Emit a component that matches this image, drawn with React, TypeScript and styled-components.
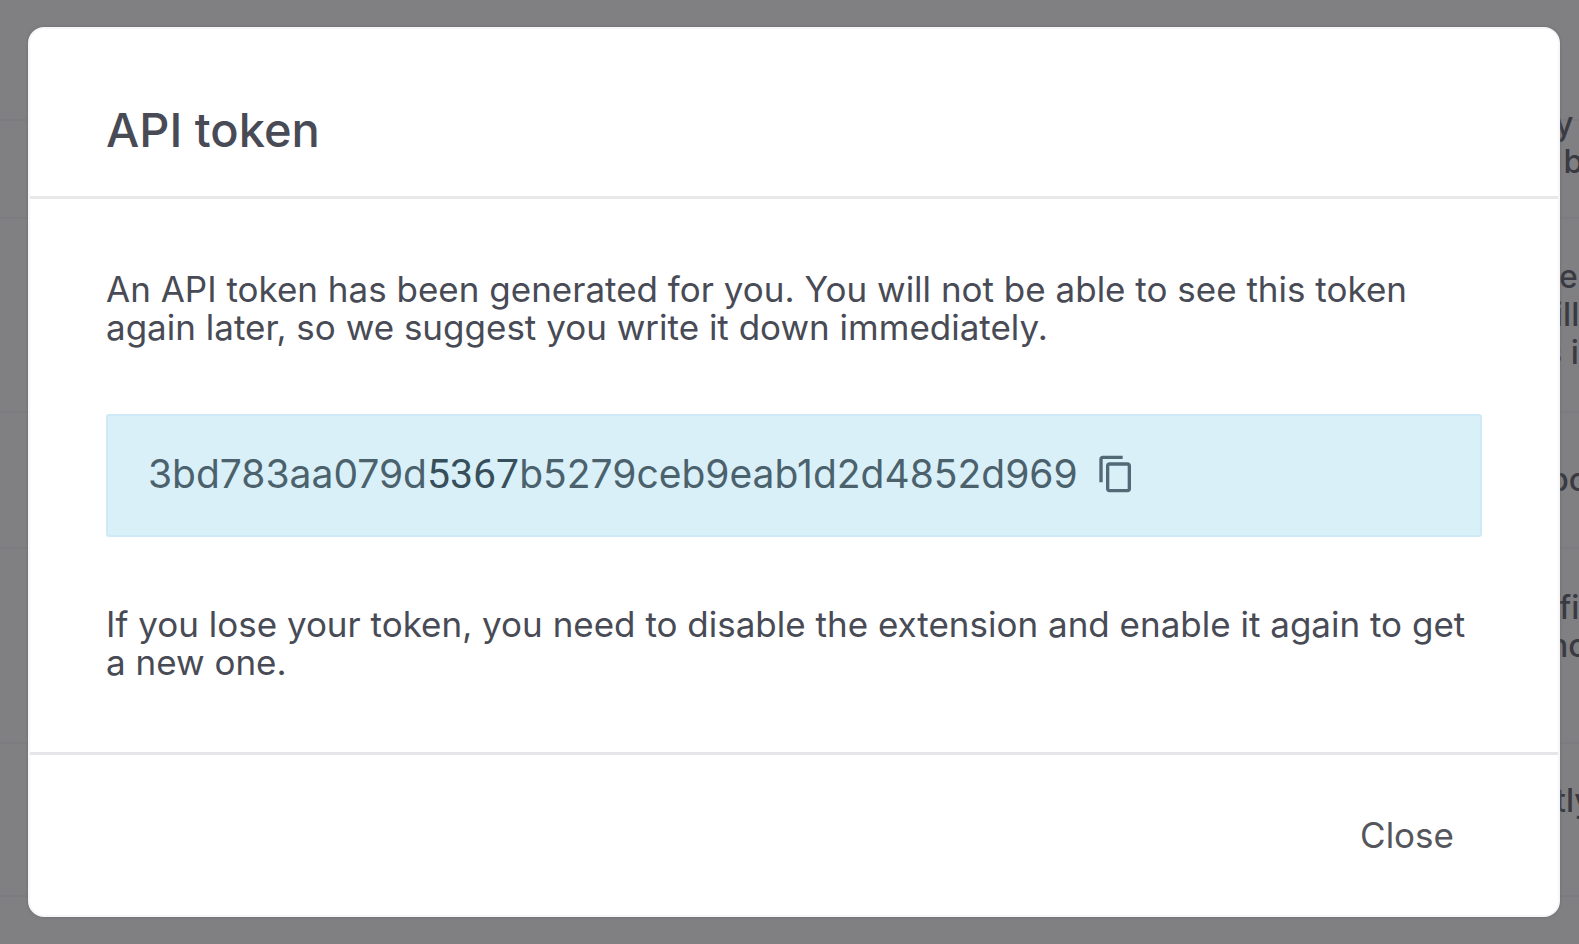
import React from "react";
import styled, { createGlobalStyle } from "styled-components";
import { MdContentCopy } from "react-icons/md";

const GlobalStyle = createGlobalStyle`
  * { box-sizing: border-box; }
  body {
    margin: 0;
    background: #808082;
    color: #484b55;
    font-family: Inter, "Open Sans", sans-serif;
  }
`;

const Stage = styled.div`
  position: relative;
  min-height: 100vh;
  overflow: hidden;
`;

const Backdrop = styled.div`
  position: absolute;
  inset: 0;
  display: flex;
  flex-direction: column;
  padding: 24px 0;
  overflow: hidden;
`;

const BackdropRow = styled.div<{ $height: number; $lift?: number }>`
  display: flex;
  flex-direction: column;
  align-items: flex-end;
  justify-content: center;
  flex: none;
  height: ${(p) => p.$height}px;
  padding-bottom: ${(p) => p.$lift ?? 0}px;
  border-bottom: 2px solid #7b7b80;
`;

const Fragment = styled.span<{ $width: number }>`
  width: ${(p) => p.$width}px;
  height: 38px;
  flex: none;
  overflow: hidden;
  white-space: pre;
  font-size: 32px;
  font-weight: 500;
  line-height: 38px;
  color: #3a3a42;
`;

const Overlay = styled.div`
  position: relative;
  padding: 27px 19px 27px 28px;
`;

const Dialog = styled.section`
  border: 2px solid #f6f6f8;
  border-radius: 16px;
  background: #fff;
  box-shadow: 0 0 3px #68686c;
`;

const Header = styled.header`
  padding: 71px 76px 36px;
  border-bottom: 3px solid #e8e8e9;
`;

const Title = styled.h1`
  margin: 0;
  font-size: 47px;
  font-weight: 500;
  line-height: 60px;
`;

const Body = styled.div`
  display: flex;
  flex-direction: column;
  gap: 68px;
  padding: 71px 76px;
`;

const Text = styled.p`
  margin: 0;
  font-size: 35px;
  line-height: 38px;
`;

const TokenBox = styled.div`
  display: flex;
  align-items: center;
  height: 123px;
  padding: 0 40px 4px;
  border: 2px solid #cfeaf7;
  border-radius: 3px;
  background: #daf0f9;
  color: #4b626d;
  font-size: 39px;
  line-height: 48px;
`;

const Token = styled.code`
  font-family: inherit;
`;

const Typed = styled.span`
  color: #364f5b;
  font-family: Roboto, sans-serif;
  font-size: 41px;
  font-weight: 400;
`;

const CopyButton = styled.button`
  display: flex;
  margin: 0 0 0 18px;
  padding: 0;
  border: 0;
  background: none;
  color: #526a75;
  cursor: pointer;
`;

const Footer = styled.footer`
  display: flex;
  justify-content: flex-end;
  padding: 48px 76px;
  border-top: 3px solid #e6e6e8;
`;

const CloseButton = styled.button`
  padding: 12px 28px;
  border: 0;
  background: none;
  color: #55565c;
  font: inherit;
  font-size: 35px;
  line-height: 40px;
  cursor: pointer;
`;

type Line = { text: string; width: number };

const rows: { height: number; lift?: number; lines: Line[] }[] = [
  { height: 97, lines: [] },
  {
    height: 98,
    lift: 14,
    lines: [
      { text: "y", width: 24 },
      { text: " b", width: 24 },
      { text: "", width: 24 },
    ],
  },
  {
    height: 194,
    lines: [
      { text: "el", width: 20 },
      { text: "ill", width: 24 },
      { text: "s i", width: 34 },
    ],
  },
  { height: 136, lines: [{ text: "po", width: 30 }] },
  {
    height: 195,
    lines: [
      { text: "fi", width: 20 },
      { text: "no", width: 30 },
      { text: "", width: 24 },
    ],
  },
  {
    height: 153,
    lines: [
      { text: "tly", width: 24 },
      { text: "", width: 24 },
    ],
  },
];

export default function App() {
  return (
    <Stage>
      <GlobalStyle />
      <Backdrop aria-hidden="true">
        {rows.map((row, i) => (
          <BackdropRow key={i} $height={row.height} $lift={row.lift}>
            {row.lines.map((line, j) => (
              <Fragment key={j} $width={line.width}>
                {line.text}
              </Fragment>
            ))}
          </BackdropRow>
        ))}
      </Backdrop>
      <Overlay>
        <Dialog role="dialog" aria-modal="true" aria-labelledby="token-title">
          <Header>
            <Title id="token-title">API token</Title>
          </Header>
          <Body>
            <Text>
              An API token has been generated for you. You will not be able to see this token again
              later, so we suggest you write it down immediately.
            </Text>
            <TokenBox>
              <Token>
                3bd783aa079d<Typed>5367</Typed>b5279ceb9eab1d2d4852d969
              </Token>
              <CopyButton type="button" aria-label="Copy token">
                <MdContentCopy size={40} />
              </CopyButton>
            </TokenBox>
            <Text>
              If you lose your token, you need to disable the extension and enable it again to get a
              new one.
            </Text>
          </Body>
          <Footer>
            <CloseButton type="button">Close</CloseButton>
          </Footer>
        </Dialog>
      </Overlay>
    </Stage>
  );
}
